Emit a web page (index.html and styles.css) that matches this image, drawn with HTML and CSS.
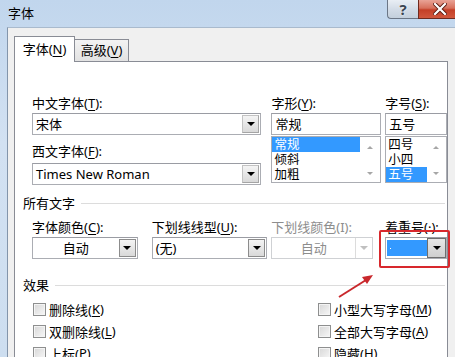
FILE: index.html
```html
<!DOCTYPE html>
<html lang="zh-CN">
<head>
  <meta charset="UTF-8">
  <meta name="viewport" content="width=device-width, initial-scale=1.0">
  <link rel="stylesheet" href="styles.css">
</head>
<body>
  <div class="window">
    <div class="titlebar">
      <span class="title">字体</span>
      <div class="caption-buttons">
        <div class="cap-btn help">?</div>
        <div class="cap-btn close">
          <svg width="14" height="12" viewBox="0 0 14 12">
            <path d="M2 1 L12 11 M12 1 L2 11" stroke="#5a1a10" stroke-width="4" stroke-linecap="square"/>
            <path d="M2 1 L12 11 M12 1 L2 11" stroke="#ffffff" stroke-width="2.2" stroke-linecap="square"/>
          </svg>
        </div>
      </div>
    </div>

    <div class="body">
      <div class="tabs">
        <div class="tab active">字体(<u>N</u>)</div>
        <div class="tab">高级(<u>V</u>)</div>
      </div>

      <div class="panel">
        <div class="font-row">
          <div class="col col-main">
            <div class="label">中文字体(<u>T</u>):</div>
            <div class="combo">
              <span class="combo-text">宋体</span>
              <span class="drop-btn"><i class="tri"></i></span>
            </div>
            <div class="label label-next">西文字体(<u>F</u>):</div>
            <div class="combo">
              <span class="combo-text">Times New Roman</span>
              <span class="drop-btn"><i class="tri"></i></span>
            </div>
          </div>

          <div class="col col-style">
            <div class="label">字形(<u>Y</u>):</div>
            <div class="combo">
              <span class="combo-text">常规</span>
            </div>
            <div class="listbox">
              <div class="list-items">
                <div class="item selected">常规</div>
                <div class="item">倾斜</div>
                <div class="item">加粗</div>
              </div>
              <div class="scrollbar">
                <i class="arrow-up"></i>
                <i class="arrow-down"></i>
              </div>
            </div>
          </div>

          <div class="col col-size">
            <div class="label">字号(<u>S</u>):</div>
            <div class="combo">
              <span class="combo-text">五号</span>
            </div>
            <div class="listbox">
              <div class="list-items">
                <div class="item">四号</div>
                <div class="item">小四</div>
                <div class="item selected">五号</div>
              </div>
              <div class="scrollbar">
                <i class="arrow-up"></i>
                <i class="arrow-down"></i>
              </div>
            </div>
          </div>
        </div>

        <div class="group-title">所有文字</div>

        <div class="all-row">
          <div class="field f-color">
            <div class="label">字体颜色(<u>C</u>):</div>
            <div class="combo">
              <span class="combo-text centered">自动</span>
              <span class="drop-btn boxed"><i class="tri"></i></span>
            </div>
          </div>
          <div class="field f-underline">
            <div class="label">下划线线型(<u>U</u>):</div>
            <div class="combo">
              <span class="combo-text">(无)</span>
              <span class="drop-btn boxed"><i class="tri"></i></span>
            </div>
          </div>
          <div class="field f-ucolor">
            <div class="label disabled">下划线颜色(I):</div>
            <div class="combo disabled">
              <span class="combo-text centered">自动</span>
              <span class="drop-btn flat"><i class="tri"></i></span>
            </div>
          </div>
          <div class="field f-emphasis">
            <div class="label">着重号(·):</div>
            <div class="combo">
              <span class="combo-text"><span class="sel-fill"><i class="dot"></i></span></span>
              <span class="drop-btn pressed"><i class="tri"></i></span>
            </div>
          </div>
        </div>

        <div class="group-title">效果</div>

        <div class="effects">
          <label class="check"><span class="box"></span>删除线(<u>K</u>)</label>
          <label class="check"><span class="box"></span>小型大写字母(<u>M</u>)</label>
          <label class="check"><span class="box"></span>双删除线(<u>L</u>)</label>
          <label class="check"><span class="box"></span>全部大写字母(<u>A</u>)</label>
          <label class="check"><span class="box"></span>上标(<u>P</u>)</label>
          <label class="check"><span class="box"></span>隐藏(<u>H</u>)</label>
        </div>

        <!-- annotation drawn over the dialog -->
        <div class="mark-box"></div>
        <svg class="mark-arrow" width="44" height="32" viewBox="0 0 44 32">
          <line x1="4" y1="27" x2="31" y2="10" stroke="#c9282c" stroke-width="2"/>
          <polygon points="38,5 27,7 32,14" fill="#c9282c"/>
        </svg>
      </div>
    </div>
  </div>
</body>
</html>
```

FILE: styles.css
```css
* {
  box-sizing: border-box;
}

html, body {
  margin: 0;
  padding: 0;
}

body {
  width: 455px;
  height: 357px;
  overflow: hidden;
  font-family: "Noto Sans", "Noto Sans CJK SC", sans-serif;
  font-size: 13px;
  color: #000;
}

u {
  text-decoration-thickness: 1px;
  text-underline-offset: 2px;
}

.window {
  height: 357px;
  display: flex;
  flex-direction: column;
  overflow: hidden;
  background: linear-gradient(180deg, #c1d6ed 0%, #d2e1f2 40%, #cddef0 100%);
}

/* title bar */
.titlebar {
  height: 27px;
  flex-shrink: 0;
  display: flex;
  justify-content: space-between;
  align-items: flex-start;
}

.title {
  padding-left: 8px;
  line-height: 27px;
  font-size: 13px;
}

.caption-buttons {
  display: flex;
  margin-right: -6px;
}

.cap-btn {
  height: 19px;
  display: flex;
  align-items: center;
  justify-content: center;
  border: 1px solid #6b7686;
  border-top: none;
}

.help {
  width: 31px;
  border-right: none;
  border-radius: 0 0 0 4px;
  background: linear-gradient(180deg, #e9eef4 0%, #d3dce7 50%, #c3cfdc 100%);
  color: #3b4552;
  font-size: 15px;
  font-weight: bold;
  text-shadow: 0 0 2px #fff;
}

.close {
  width: 43px;
  border-color: #6f2a1e;
  background: linear-gradient(180deg, #e9a396 0%, #d7705c 45%, #c43f27 55%, #d1573d 100%);
}

/* dialog body */
.body {
  flex: 1;
  margin-left: 7px;
  border-left: 1px solid #8395ab;
  border-top: 1px solid #a9bacd;
  background: #f0f0f0;
  padding: 8px 0 0 6px;
  display: flex;
  flex-direction: column;
}

.tabs {
  display: flex;
  align-items: flex-start;
  height: 25px;
  position: relative;
  z-index: 1;
}

.tab {
  width: 54px;
  height: 22px;
  margin-top: 3px;
  border: 1px solid #898c95;
  border-left: none;
  border-bottom: none;
  background: linear-gradient(180deg, #f3f3f3, #e2e2e2);
  text-align: center;
  line-height: 21px;
}

.tab.active {
  width: 61px;
  height: 26px;
  margin-top: 0;
  border-left: 1px solid #898c95;
  background: #fff;
  line-height: 25px;
}

.panel {
  flex: 1;
  width: 434px;
  background: #fff;
  border: 1px solid #898c95;
  border-bottom: none;
  padding: 33px 0 0 17px;
  position: relative;
}

.label {
  height: 16px;
  line-height: 16px;
  margin-bottom: 2px;
  white-space: nowrap;
}

.label.disabled {
  color: #8d8d8d;
}

.label-next {
  margin-top: 8px;
  margin-bottom: 4px;
}

.combo {
  height: 22px;
  border: 1px solid #abadb3;
  border-top-color: #9a9ca3;
  background: #fff;
  display: flex;
  align-items: center;
}

.combo.disabled {
  border-color: #cfd1d4;
  color: #8d8d8d;
}

.combo-text {
  flex: 1;
  padding-left: 3px;
  white-space: nowrap;
  line-height: 20px;
}

.combo-text.centered {
  text-align: center;
  padding-left: 0;
}

.drop-btn {
  width: 17px;
  height: 18px;
  margin-right: 1px;
  display: flex;
  align-items: center;
  justify-content: center;
  background: linear-gradient(180deg, #f4f4f4, #d9d9d9);
  border: 1px solid #c3c3c3;
  border-right-color: #a5a5a5;
  border-bottom-color: #a5a5a5;
}

.drop-btn.boxed {
  border-color: #8c8c8c;
}

.drop-btn.flat {
  background: #fff;
  border: none;
  border-left: 1px solid #dcdcdc;
  height: 20px;
  margin-right: 0;
}

.drop-btn.flat .tri {
  border-top-color: #c0c0c0;
}

.drop-btn.pressed {
  width: 19px;
  height: 20px;
  margin-right: 0;
  border-color: #6e6e6e;
  background: linear-gradient(180deg, #e6e6e6, #cfcfcf);
}

.tri {
  width: 0;
  height: 0;
  border-left: 4px solid transparent;
  border-right: 4px solid transparent;
  border-top: 4px solid #000;
}

/* font / style / size lists */
.font-row {
  display: flex;
}

.col-main {
  width: 230px;
  margin-right: 10px;
}

.col-style {
  width: 110px;
  margin-right: 4px;
}

.col-size {
  width: 62px;
}

.listbox {
  height: 47px;
  margin-top: 1px;
  border: 1px solid #abadb3;
  display: flex;
  overflow: hidden;
}

.list-items {
  flex: 1;
}

.item {
  height: 15px;
  line-height: 15px;
  font-size: 12.5px;
  padding-left: 2px;
  overflow: hidden;
}

.item.selected {
  background: #3399ff;
  color: #fff;
}

.scrollbar {
  width: 20px;
  display: flex;
  flex-direction: column;
  justify-content: space-between;
  align-items: center;
  padding: 9px 0 7px;
}

.col-size .scrollbar {
  width: 19px;
}

.arrow-up,
.arrow-down {
  width: 0;
  height: 0;
  border-left: 3px solid transparent;
  border-right: 3px solid transparent;
}

.arrow-up {
  border-bottom: 3px solid #a6a6a6;
}

.arrow-down {
  border-top: 3px solid #a6a6a6;
}

/* group headings */
.group-title {
  display: flex;
  align-items: center;
  height: 16px;
  line-height: 16px;
  margin: 10px 2px 0 -9px;
}

.group-title::after {
  content: "";
  flex: 1;
  height: 1px;
  background: #dcdcdc;
  margin-left: 6px;
}

/* all text row */
.all-row {
  display: flex;
  margin-top: 8px;
}

.f-color {
  width: 106px;
  margin-right: 14px;
}

.f-underline {
  width: 116px;
  margin-right: 4px;
}

.f-ucolor {
  width: 102px;
  margin-right: 12px;
}

.f-emphasis {
  width: 62px;
}

.f-emphasis .combo-text {
  padding: 0 0 0 1px;
  display: flex;
}

.sel-fill {
  display: block;
  width: 40px;
  height: 16px;
  background: #3399ff;
  position: relative;
}

.dot {
  position: absolute;
  left: 3px;
  top: 8px;
  width: 1px;
  height: 1px;
  background: #fff;
}

.all-row + .group-title {
  margin-top: 18px;
}

/* effects checkboxes */
.effects {
  display: grid;
  grid-template-columns: 285px 1fr;
  margin-top: 5px;
}

.check {
  height: 22px;
  display: flex;
  align-items: center;
  white-space: nowrap;
}

.box {
  width: 13px;
  height: 13px;
  margin: 0 3px 0 1px;
  border: 1px solid #8e8f8f;
  box-shadow: inset 0 0 0 1px #f4f4f4;
  background: linear-gradient(135deg, #d7d7d7, #f7f7f7);
}

/* red annotation */
.mark-box {
  position: absolute;
  left: 364px;
  top: 168px;
  width: 71px;
  height: 38px;
  border: 2px solid #d8282d;
  border-radius: 2px;
}

.mark-arrow {
  position: absolute;
  left: 320px;
  top: 208px;
}
```
